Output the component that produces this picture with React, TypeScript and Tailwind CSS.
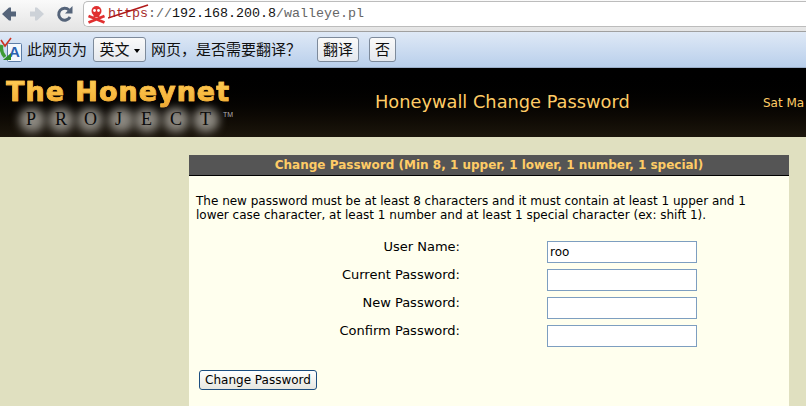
import React from "react";

const Field = ({ label, value }: { label: string; value?: string }) => (
  <div className="flex h-[28px] items-start">
    <div className="w-[264px] text-right text-[13px] leading-[15px]">{label}</div>
    <div className="ml-[87px] mt-[2px] h-[22px] w-[150px] border border-[#7d9ec0] bg-white pl-[2px] text-[12px] leading-[21px] text-black">{value}</div>
  </div>
);

const letters = [
  { c: "P", x: 26 },
  { c: "R", x: 55 },
  { c: "O", x: 84 },
  { c: "J", x: 115 },
  { c: "E", x: 141 },
  { c: "C", x: 170 },
  { c: "T", x: 200 },
];

const Logo = () => (
  <div className="relative h-[69px] w-[240px] shrink-0">
    <div className="absolute left-[6px] top-[8px] whitespace-nowrap bg-gradient-to-b from-[#ffd05a] to-[#f4a92c] bg-clip-text font-['DejaVu_Sans',sans-serif] text-[27px] font-bold leading-[32px] tracking-[1px] text-transparent [-webkit-text-stroke:0.7px_#f9bb3e]">The Honeynet</div>
    {letters.map((l) => (
      <div key={l.c + "g"} className="absolute top-[40px] h-[24px] w-[26px] rounded-full bg-[#8a867e] blur-[4px]" style={{ left: l.x - 7 }}></div>
    ))}
    {letters.map((l) => (
      <span key={l.c} className="absolute top-[38px] font-['Liberation_Serif',serif] text-[18px] leading-[26px] text-[#0c0c0c]" style={{ left: l.x }}>{l.c}</span>
    ))}
    <div className="absolute left-[223px] top-[43px] font-['Liberation_Sans',sans-serif] text-[7px] leading-[8px] text-[#b0b0b0]">TM</div>
  </div>
);

export default function App() {
  return (
    <div className="flex h-[406px] w-[806px] flex-col overflow-hidden bg-[#e0e0c0] font-['DejaVu_Sans',sans-serif] text-[12px] text-black">
      <div className="flex h-[32px] shrink-0 items-start border-b border-[#a0a0a0] bg-gradient-to-b from-[#fafafa] to-[#e4e4e4] pt-[1px]">
        <div className="flex w-[83px] shrink-0 items-center">
          <svg width="83" height="26" viewBox="0 0 83 26">
            <path d="M2 13 L9 6.5 H11 V10.5 H16 V15.5 H11 V19.5 H9 Z" fill="#55647a" />
            <path d="M44 13 L37 6.5 H35 V10.5 H30 V15.5 H35 V19.5 H37 Z" fill="#cdd2d8" />
            <path d="M69 9 A6 6 0 1 0 70 16" fill="none" stroke="#55647a" strokeWidth="3" />
            <path d="M72.5 5 V12.5 H65 Z" fill="#55647a" />
          </svg>
        </div>
        <div className="flex h-[26px] flex-1 items-center rounded-l-[5px] border-y border-l border-[#bcbcbc] bg-white pl-[3px] font-['Liberation_Mono',monospace] text-[13.33px]">
          <svg width="19" height="19" viewBox="0 0 19 19" className="mr-[2px]">
            <circle cx="9.5" cy="6" r="5" fill="#e03030" />
            <rect x="6.5" y="9" width="6" height="3" fill="#e03030" />
            <circle cx="7.5" cy="5.5" r="1.4" fill="#fff" />
            <circle cx="11.5" cy="5.5" r="1.4" fill="#fff" />
            <path d="M1.5 11 L17.5 17.5 M17.5 11 L1.5 17.5" stroke="#e03030" strokeWidth="2.8" />
          </svg>
          <span className="relative text-[#a52a2a]">
            https
            <svg width="42" height="16" viewBox="0 0 42 16" className="absolute left-0 top-[-1px]">
              <path d="M0 15 L40 2" stroke="#b01818" strokeWidth="1.6" />
            </svg>
          </span>
          <span className="text-[#666]">://</span>
          <span className="text-[#111]">192.168.200.8</span>
          <span className="text-[#666]">/walleye.pl</span>
        </div>
      </div>
      <div className="flex h-[36px] shrink-0 items-center border-b border-[#9aaec8] bg-gradient-to-b from-[#dfe9f6] to-[#b9cfeb] font-['Noto_Sans_CJK_SC',sans-serif] text-[15px] text-[#111]">
        <svg width="23" height="26" viewBox="0 0 23 26" className="shrink-0">
          <rect x="7.5" y="6.5" width="14" height="18" rx="1" fill="#f4f8fd" stroke="#5d7da6" />
          <text x="9" y="20" fontSize="15" fontWeight="bold" fill="#2a62b0" fontFamily="Liberation Sans">A</text>
          <path d="M1 3 L5 9 L11 1" fill="none" stroke="#cc3322" strokeWidth="1.6" />
          <path d="M2 8 Q0 14 5 20" fill="none" stroke="#3d9b35" strokeWidth="3.4" />
          <path d="M3 23 L11 23 L11 16 Z" fill="#2e8a2a" />
        </svg>
        <span className="ml-[4px]">此网页为</span>
        <div className="ml-[6px] flex h-[25px] w-[53px] items-center justify-center rounded-[3px] border border-[#7d8a9b] bg-gradient-to-b from-[#fafafa] to-[#e4e8ee]">
          英文
          <span className="ml-[4px] mt-[2px] h-0 w-0 border-x-[3.5px] border-t-[4px] border-x-transparent border-t-black"></span>
        </div>
        <span className="ml-[5px]">网页，是否需要翻译？</span>
        <div className="ml-[16px] flex h-[25px] w-[42px] items-center justify-center rounded-[3px] border border-[#7d8a9b] bg-gradient-to-b from-[#fafafa] to-[#e4e8ee]">翻译</div>
        <div className="ml-[10px] flex h-[25px] w-[27px] items-center justify-center rounded-[3px] border border-[#7d8a9b] bg-gradient-to-b from-[#fafafa] to-[#e4e8ee]">否</div>
      </div>
      <div className="flex h-[69px] shrink-0 items-center overflow-hidden bg-gradient-to-b from-black to-[#1c160c] text-[#ffcc66]">
        <Logo />
        <div className="ml-[135px] w-[255px] shrink-0 whitespace-nowrap text-[17.8px]">Honeywall Change Password</div>
        <div className="ml-[133px] whitespace-nowrap text-[12px]">Sat Ma</div>
      </div>
      <div className="flex-1 pl-[189px] pr-[17px] pt-[18px]">
        <div className="h-full">
          <div className="h-[21px] border-b border-black bg-[#555555] text-center text-[12px] font-bold leading-[20px] text-[#ffcc66]">
            Change Password (Min 8, 1 upper, 1 lower, 1 number, 1 special)
          </div>
          <div className="h-full bg-[#ffffee] px-[7px] pt-[18px]">
            <p className="leading-[14px]">The new password must be at least 8 characters and it must contain at least 1 upper and 1 lower case character, at least 1 number and at least 1 special character (ex: shift 1).</p>
            <div className="mt-[17px]">
              <Field label="User Name:" value="roo" />
              <Field label="Current Password:" />
              <Field label="New Password:" />
              <Field label="Confirm Password:" />
            </div>
            <button className="ml-[3px] mt-[19px] h-[20px] w-[118px] rounded-[3px] border border-[#1c4e80] bg-gradient-to-b from-white to-[#e6e6e0] text-[12px] leading-[18px]">Change Password</button>
          </div>
        </div>
      </div>
    </div>
  );
}
